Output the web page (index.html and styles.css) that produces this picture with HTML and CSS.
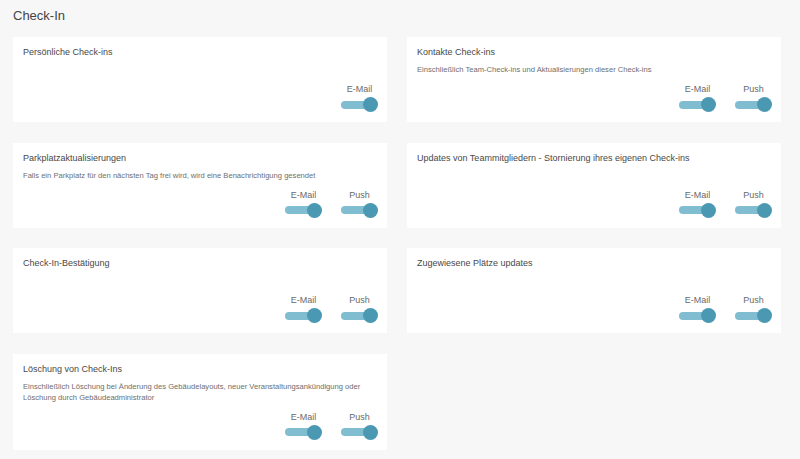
FILE: index.html
```html
<!DOCTYPE html>
<html lang="de">
<head>
<meta charset="utf-8">
<title>Check-In</title>
<link rel="stylesheet" href="styles.css">
</head>
<body>
<main class="page">
  <h1 class="page-title">Check-In</h1>
  <div class="grid">
    <section class="card">
      <h2 class="card-title">Persönliche Check-ins</h2>
      <div class="toggles">
        <div class="toggle-item"><span class="toggle-label">E-Mail</span><span class="toggle"><span class="track"></span><span class="knob"></span></span></div>
      </div>
    </section>
    <section class="card">
      <h2 class="card-title">Kontakte Check-ins</h2>
      <p class="card-desc">Einschließlich Team-Check-ins und Aktualisierungen dieser Check-ins</p>
      <div class="toggles">
        <div class="toggle-item"><span class="toggle-label">E-Mail</span><span class="toggle"><span class="track"></span><span class="knob"></span></span></div>
        <div class="toggle-item"><span class="toggle-label">Push</span><span class="toggle"><span class="track"></span><span class="knob"></span></span></div>
      </div>
    </section>
    <section class="card">
      <h2 class="card-title">Parkplatzaktualisierungen</h2>
      <p class="card-desc">Falls ein Parkplatz für den nächsten Tag frei wird, wird eine Benachrichtigung gesendet</p>
      <div class="toggles">
        <div class="toggle-item"><span class="toggle-label">E-Mail</span><span class="toggle"><span class="track"></span><span class="knob"></span></span></div>
        <div class="toggle-item"><span class="toggle-label">Push</span><span class="toggle"><span class="track"></span><span class="knob"></span></span></div>
      </div>
    </section>
    <section class="card">
      <h2 class="card-title">Updates von Teammitgliedern - Stornierung ihres eigenen Check-ins</h2>
      <div class="toggles">
        <div class="toggle-item"><span class="toggle-label">E-Mail</span><span class="toggle"><span class="track"></span><span class="knob"></span></span></div>
        <div class="toggle-item"><span class="toggle-label">Push</span><span class="toggle"><span class="track"></span><span class="knob"></span></span></div>
      </div>
    </section>
    <section class="card">
      <h2 class="card-title">Check-In-Bestätigung</h2>
      <div class="toggles">
        <div class="toggle-item"><span class="toggle-label">E-Mail</span><span class="toggle"><span class="track"></span><span class="knob"></span></span></div>
        <div class="toggle-item"><span class="toggle-label">Push</span><span class="toggle"><span class="track"></span><span class="knob"></span></span></div>
      </div>
    </section>
    <section class="card">
      <h2 class="card-title">Zugewiesene Plätze updates</h2>
      <div class="toggles">
        <div class="toggle-item"><span class="toggle-label">E-Mail</span><span class="toggle"><span class="track"></span><span class="knob"></span></span></div>
        <div class="toggle-item"><span class="toggle-label">Push</span><span class="toggle"><span class="track"></span><span class="knob"></span></span></div>
      </div>
    </section>
    <section class="card">
      <h2 class="card-title">Löschung von Check-Ins</h2>
      <p class="card-desc">Einschließlich Löschung bei Änderung des Gebäudelayouts, neuer Veranstaltungsankündigung oder Löschung durch Gebäudeadministrator</p>
      <div class="toggles">
        <div class="toggle-item"><span class="toggle-label">E-Mail</span><span class="toggle"><span class="track"></span><span class="knob"></span></span></div>
        <div class="toggle-item"><span class="toggle-label">Push</span><span class="toggle"><span class="track"></span><span class="knob"></span></span></div>
      </div>
    </section>
  </div>
</main>
</body>
</html>
```

FILE: styles.css
```css
* { box-sizing: border-box; }
html, body {
  margin: 0;
  padding: 0;
  background: #f7f7f7;
  font-family: "Liberation Sans", Arial, sans-serif;
  overflow: hidden;
}
.page {
  padding: 6px 19px 0 13px;
}
.page-title {
  margin: 0;
  font-size: 13px;
  line-height: 20px;
  font-weight: normal;
  color: #444;
}
.grid {
  margin-top: 11px;
  display: grid;
  grid-template-columns: 374px 374px;
  column-gap: 20px;
  row-gap: 20.5px;
}
.card {
  background: #fff;
  min-height: 85px;
  padding: 10px 9px 10px 10px;
  display: flex;
  flex-direction: column;
}
.card-title {
  margin: 0;
  font-size: 9px;
  line-height: 11px;
  font-weight: normal;
  color: #484848;
}
.card-desc {
  margin: 6px 0 0;
  font-size: 7.6px;
  line-height: 11px;
  color: #6e6e6e;
}
.toggles {
  margin-top: auto;
  padding-top: 9px;
  display: flex;
  justify-content: flex-end;
  gap: 19px;
}
.toggle-item {
  display: flex;
  flex-direction: column;
  align-items: center;
  width: 37px;
}
.toggle-label {
  font-size: 9px;
  line-height: 11px;
  color: #6a6a6a;
}
.toggle {
  position: relative;
  display: block;
  width: 37px;
  height: 15px;
  margin-top: 2px;
}
.track {
  position: absolute;
  left: 0;
  top: 3.5px;
  width: 34px;
  height: 8px;
  border-radius: 4px;
  background: #80bdd0;
}
.knob {
  position: absolute;
  right: 0;
  top: 0;
  width: 15px;
  height: 15px;
  border-radius: 50%;
  background: #4b98b3;
}
```
